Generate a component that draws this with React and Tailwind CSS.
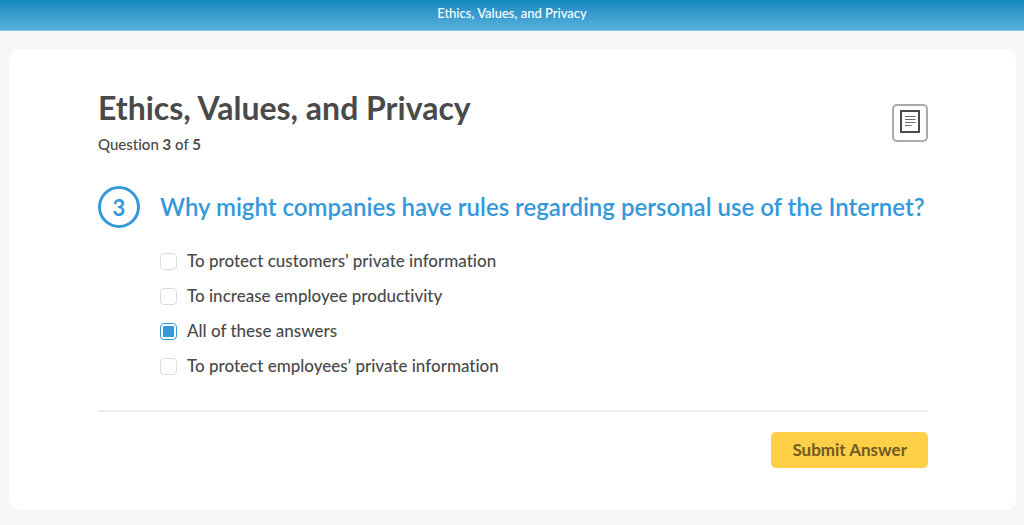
import React, { useState } from "react";

const quiz = {
  title: "Ethics, Values, and Privacy",
  number: 3,
  total: 5,
  question: "Why might companies have rules regarding personal use of the Internet?",
  answers: [
    "To protect customers’ private information",
    "To increase employee productivity",
    "All of these answers",
    "To protect employees’ private information",
  ],
};

const NotesIcon = () => (
  <svg
    width="22"
    height="24"
    viewBox="0 0 22 24"
    fill="none"
    stroke="#4a4a4a"
    aria-hidden="true"
  >
    <rect x="2" y="2" width="18" height="21" strokeWidth="2" />
    <path
      d="M6 7.5h10.5M6 10.5h10.5M6 13.5h10.5M6 16.5h6.5"
      stroke="#6b6b6b"
      strokeWidth="1"
    />
  </svg>
);

const AnswerOption = ({ label, name, checked, onChange }) => (
  <label className="flex w-fit items-center gap-2.5 cursor-pointer">
    <input
      type="checkbox"
      name={name}
      checked={checked}
      onChange={onChange}
      className="size-[17px] shrink-0 appearance-none rounded-[4px] border border-[#dcdcdc] bg-white p-0.5 checked:border-[#3498db] checked:bg-[#3498db] checked:bg-clip-content"
    />
    <span>{label}</span>
  </label>
);

const App = () => {
  const [selected, setSelected] = useState(2);

  const handleSubmit = (e) => {
    e.preventDefault();
  };

  return (
    <div className="min-h-screen bg-[#f6f6f6] font-['Lato',sans-serif] text-[#4a4a4a] [font-variant-ligatures:none]">
      <header className="border-b border-[#7cc4e4] bg-linear-to-b from-[#1288c0] to-[#55b0db] pt-[3px] pb-[7px] text-center text-[13px] leading-5 font-medium text-white">
        {quiz.title}
      </header>
      <main className="mt-[18px] mr-2 ml-[9px] rounded-[10px] bg-white pt-[39px] pr-[88px] pb-[42px] pl-[89px]">
        <div className="flex items-start justify-between">
          <div>
            <h1 className="text-[32px] leading-10 font-bold">{quiz.title}</h1>
            <p className="mt-1.5 text-[15px] leading-5 font-medium">
              Question <strong className="font-bold">{quiz.number}</strong> of{" "}
              <strong className="font-bold">{quiz.total}</strong>
            </p>
          </div>
          <button
            type="button"
            aria-label="Notes"
            className="mt-4 flex h-[38px] w-9 items-center justify-center rounded-[5px] border-2 border-[#aaaaaa] bg-white pb-1"
          >
            <NotesIcon />
          </button>
        </div>
        <form onSubmit={handleSubmit}>
          <div className="mt-8 flex items-center gap-5">
            <span className="flex size-[42px] shrink-0 items-center justify-center rounded-full border-3 border-[#3498db] text-[22px] font-bold text-[#3498db]">
              {quiz.number}
            </span>
            <h2 className="text-2xl leading-8 font-semibold text-[#3498db]">
              {quiz.question}
            </h2>
          </div>
          <div className="mt-[21px] ml-[62px] flex flex-col gap-[11px] text-[17px] leading-6 font-medium">
            {quiz.answers.map((answer, i) => (
              <AnswerOption
                key={answer}
                name="answer"
                label={answer}
                checked={selected === i}
                onChange={() => setSelected(i)}
              />
            ))}
          </div>
          <div className="mt-8 flex justify-end border-t-2 border-[#ececec] pt-5">
            <button
              type="submit"
              className="rounded-[5px] bg-[#ffcf48] px-[21px] py-1.5 text-[17px] leading-6 font-bold text-[#705b20]"
            >
              Submit Answer
            </button>
          </div>
        </form>
      </main>
    </div>
  );
};

export default App;
